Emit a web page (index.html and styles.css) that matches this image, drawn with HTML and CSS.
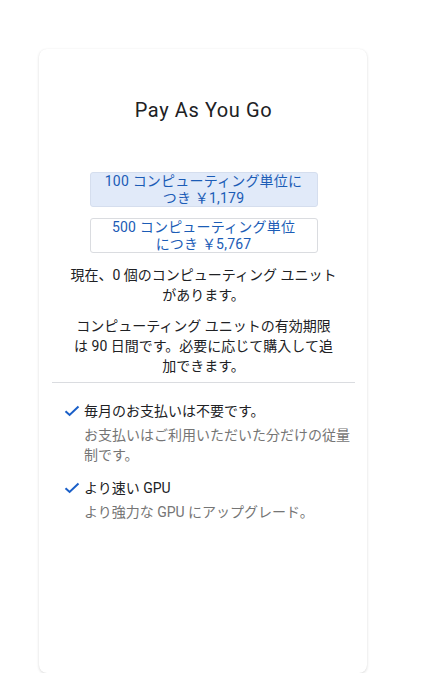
FILE: index.html
```html
<!DOCTYPE html>
<html lang="ja">
<head>
<meta charset="utf-8">
<link rel="stylesheet" href="styles.css">
</head>
<body>
<div class="page">
  <div class="card">
    <h2 class="title">Pay As You Go</h2>
    <div class="options">
      <button class="option selected">100 コンピューティング単位に<br>つき ￥1,179</button>
      <button class="option">500 コンピューティング単位<br>につき ￥5,767</button>
    </div>
    <p class="info first">現在、0 個のコンピューティング ユニットがあります。</p>
    <p class="info">コンピューティング ユニットの有効期限は 90 日間です。必要に応じて購入して追加できます。</p>
    <hr class="divider">
    <ul class="features">
      <li class="feature">
        <svg class="check" viewBox="0 0 16 12" width="16" height="12"><path d="M1.5 6.2 L5.6 10 L14.5 1.5" fill="none" stroke="#1a5fc8" stroke-width="2"/></svg>
        <div class="feature-text">
          <div class="feature-title">毎月のお支払いは不要です。</div>
          <div class="feature-sub">お支払いはご利用いただいた分だけの従量制です。</div>
        </div>
      </li>
      <li class="feature">
        <svg class="check" viewBox="0 0 16 12" width="16" height="12"><path d="M1.5 6.2 L5.6 10 L14.5 1.5" fill="none" stroke="#1a5fc8" stroke-width="2"/></svg>
        <div class="feature-text">
          <div class="feature-title">より速い GPU</div>
          <div class="feature-sub">より強力な GPU にアップグレード。</div>
        </div>
      </li>
    </ul>
  </div>
</div>
</body>
</html>
```
FILE: styles.css
```css
html, body {
  margin: 0;
  padding: 0;
  background: #ffffff;
}
body {
  font-family: Roboto, "Noto Sans CJK JP", sans-serif;
  color: #202124;
}
.page {
  display: flex;
  padding: 49px 0 0 39px;
}
.card {
  box-sizing: border-box;
  width: 328px;
  height: 624px;
  background: #ffffff;
  border-radius: 8px;
  box-shadow: 0 1px 3px rgba(0, 0, 0, 0.14), 0 0 1px rgba(0, 0, 0, 0.06);
  padding: 47px 12px 0 13px;
  display: flex;
  flex-direction: column;
  align-items: center;
}
.title {
  margin: 0;
  font-size: 20px;
  font-weight: 400;
  line-height: 28px;
  color: #202124;
  letter-spacing: 0.6px;
}
.options {
  margin-top: 48px;
  display: flex;
  flex-direction: column;
  gap: 11px;
}
.option {
  box-sizing: border-box;
  width: 228px;
  height: 35px;
  padding: 0 4px;
  border: 1px solid #dadce0;
  border-radius: 3px;
  background: #ffffff;
  color: #1b5cb6;
  font-family: Roboto, "Noto Sans CJK JP", sans-serif;
  font-size: 14px;
  line-height: 16.5px;
  text-align: center;
  letter-spacing: 0.2px;
}
.option.selected {
  background: #e1eaf9;
  border-color: #d5deee;
}
.info {
  margin: 11px 0 0;
  width: 266px;
  font-size: 14px;
  line-height: 20px;
  text-align: center;
  color: #202124;
}
.info.first {
  margin-top: 12px;
}
.divider {
  align-self: stretch;
  margin: 6px 0 0;
  border: 0;
  border-top: 1px solid #dadce0;
}
.features {
  align-self: stretch;
  list-style: none;
  margin: 18px 0 0;
  padding: 0;
  display: flex;
  flex-direction: column;
  gap: 13px;
}
.feature {
  display: flex;
  align-items: flex-start;
  gap: 4px;
  padding-left: 12px;
}
.check {
  margin-top: 4px;
  flex: none;
}
.feature-text {
  width: 271px;
}
.feature-title {
  font-size: 14px;
  line-height: 20px;
  color: #202124;
}
.feature-sub {
  margin-top: 4px;
  font-size: 14px;
  line-height: 20px;
  color: #757575;
}
```
